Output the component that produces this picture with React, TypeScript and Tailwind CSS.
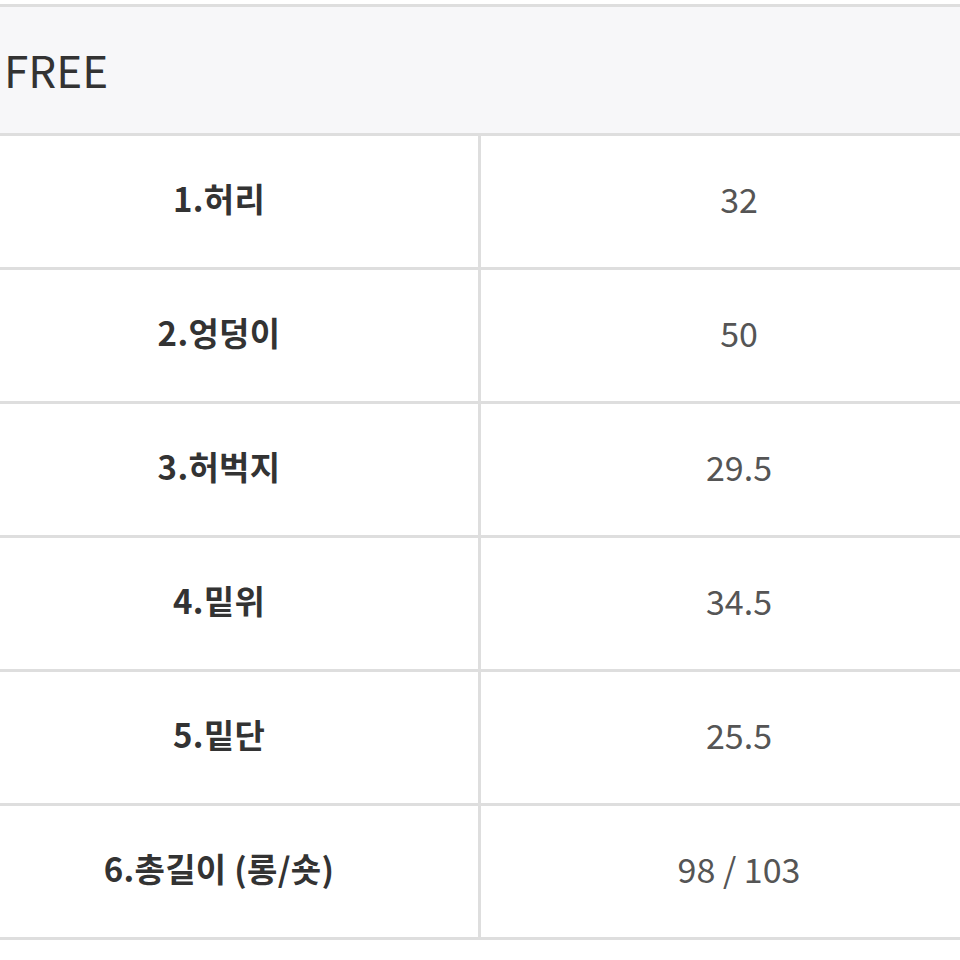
import React from "react";

const rows = [
  { label: "1.허리", value: "32" },
  { label: "2.엉덩이", value: "50" },
  { label: "3.허벅지", value: "29.5" },
  { label: "4.밑위", value: "34.5" },
  { label: "5.밑단", value: "25.5" },
  { label: "6.총길이 (롱/숏)", value: "98 / 103" },
];

export default function App() {
  return (
    <div
      className="w-[960px] h-[960px] overflow-hidden bg-white pt-[4px]"
      style={{ fontFamily: '"Noto Sans CJK KR", "Noto Sans", sans-serif' }}
    >
      <div className="w-[1037px] -ml-[40px] border-t-[3px] border-[#dedede]">
        {/* Header */}
        <div className="h-[129px] bg-[#f7f7f9] border-b-[3px] border-[#dedede] flex items-center pl-[44px] pb-[2px]">
          <span className="text-[44px] text-[#333] leading-none">FREE</span>
        </div>

        {/* Rows */}
        {rows.map((row) => (
          <div
            key={row.label}
            className="h-[134px] flex border-b-[3px] border-[#dedede]"
          >
            <div className="w-[521px] flex items-center justify-center border-r-[3px] border-[#dedede] pb-[6px]">
              <span className="text-[33px] font-bold text-[#333] leading-none tracking-[0.3px]">
                {row.label}
              </span>
            </div>
            <div className="flex-1 flex items-center justify-center pb-[6px]">
              <span className="text-[34px] text-[#555] leading-none">
                {row.value}
              </span>
            </div>
          </div>
        ))}
      </div>
    </div>
  );
}
